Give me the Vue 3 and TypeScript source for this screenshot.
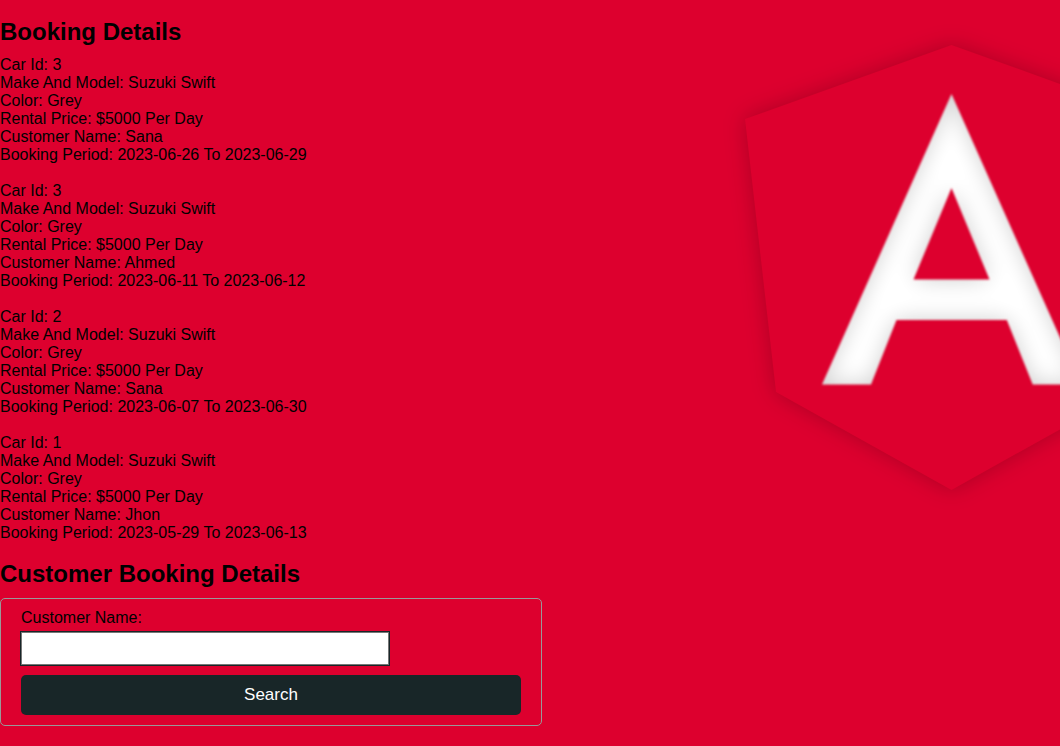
<script setup lang="ts">
import { ref } from 'vue'

interface Booking {
  carId: number
  customer: string
  from: string
  to: string
}

const bookings: Booking[] = [
  { carId: 3, customer: 'Sana', from: '2023-06-26', to: '2023-06-29' },
  { carId: 3, customer: 'Ahmed', from: '2023-06-11', to: '2023-06-12' },
  { carId: 2, customer: 'Sana', from: '2023-06-07', to: '2023-06-30' },
  { carId: 1, customer: 'Jhon', from: '2023-05-29', to: '2023-06-13' },
]

const customerName = ref('')
</script>

<template>
  <div class="page">
    <svg class="backdrop" viewBox="0 0 360 746" width="360" height="746" aria-hidden="true">
      <defs>
        <filter id="shield-shadow" x="-20%" y="-20%" width="140%" height="140%">
          <feGaussianBlur stdDeviation="11" />
        </filter>
        <filter id="inner-shade" x="-20%" y="-20%" width="140%" height="140%" color-interpolation-filters="sRGB">
          <feComponentTransfer in="SourceAlpha" result="outside">
            <feFuncA type="linear" slope="-1" intercept="1" />
          </feComponentTransfer>
          <feGaussianBlur in="outside" stdDeviation="12" result="soft" />
          <feComponentTransfer in="soft" result="faint">
            <feFuncA type="linear" slope="0.2" intercept="-0.005" />
          </feComponentTransfer>
          <feComposite in="faint" in2="SourceAlpha" operator="in" result="shade" />
          <feMerge result="letter">
            <feMergeNode in="SourceGraphic" />
            <feMergeNode in="shade" />
          </feMerge>
          <feGaussianBlur in="letter" stdDeviation="0.8" />
        </filter>
      </defs>
      <path class="shadow" filter="url(#shield-shadow)" d="M251.5 45 458 119 427 392 251.5 490 76 392 45 119Z" />
      <path class="shield" d="M251.5 45 458 119 427 392 251.5 490 76 392 45 119Z" />
      <path
        class="letter"
        fill-rule="evenodd"
        filter="url(#inner-shade)"
        d="M251.5 94 381 384.5H332.7L306.8 320H196.5L171 384.5H122ZM251.5 188 213.5 279.5H289.5Z"
      />
    </svg>

    <main class="content">
      <h2>Booking Details</h2>
      <section v-for="(b, i) in bookings" :key="i" class="booking">
        <div>Car Id: {{ b.carId }}</div>
        <div>Make And Model: Suzuki Swift</div>
        <div>Color: Grey</div>
        <div>Rental Price: $5000 Per Day</div>
        <div>Customer Name: {{ b.customer }}</div>
        <div>Booking Period: {{ b.from }} To {{ b.to }}</div>
      </section>

      <h2 class="second">Customer Booking Details</h2>
      <form class="search" @submit.prevent>
        <label for="customer">Customer Name:</label>
        <input id="customer" v-model="customerName" type="text" />
        <button type="submit">Search</button>
      </form>
    </main>
  </div>
</template>

<style>
body {
  background: #dd002e;
}
</style>

<style scoped>
.page {
  position: relative;
  height: 746px;
  overflow: hidden;
  background: #dd002e;
  color: #000;
  font: 16px/18px "Liberation Sans", Arial, sans-serif;
}

.backdrop {
  position: absolute;
  top: 0;
  right: 0;
}

.shadow {
  fill: #000;
  fill-opacity: 0.22;
}

.shield {
  fill: #dd002e;
}

.letter {
  fill: #fff;
}

.content {
  position: relative;
  width: 542px;
  padding-top: 18px;
}

h2 {
  margin: 0 0 11px;
  font-size: 24px;
  line-height: 27px;
  font-weight: 700;
}

.booking + .booking {
  margin-top: 18px;
}

.second {
  margin: 18px 0 11px;
}

.search {
  box-sizing: border-box;
  display: flex;
  flex-direction: column;
  align-items: flex-start;
  width: 542px;
  height: 128px;
  padding: 10px 20px;
  border: 1px solid #999;
  border-radius: 5px;
}

.search input {
  box-sizing: border-box;
  width: 368px;
  height: 33px;
  margin: 5px 0 10px;
  padding: 0 8px;
  border: 1px solid #767676;
  border-radius: 0;
  outline: 1px solid #182628;
  background: #fff;
  font: inherit;
}

.search button {
  width: 500px;
  height: 40px;
  padding: 0;
  border: 0;
  border-radius: 5px;
  background: #182628;
  color: #fff;
  font: 17px/20px "Liberation Sans", Arial, sans-serif;
}
</style>
